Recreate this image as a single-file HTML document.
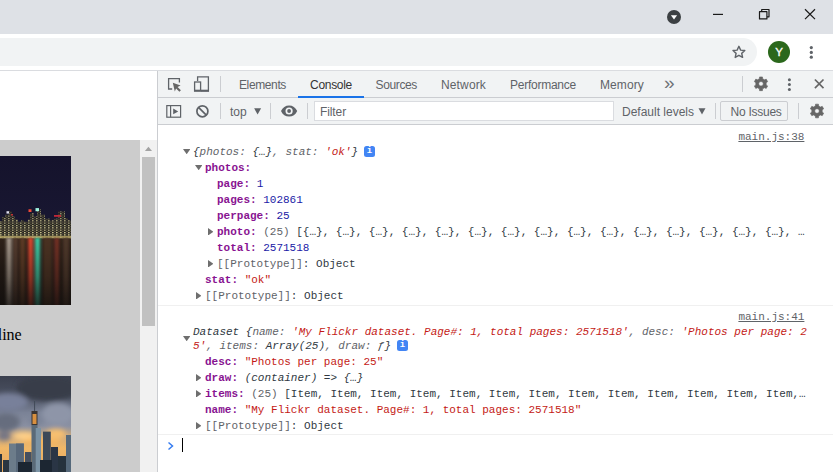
<!DOCTYPE html>
<html><head><meta charset="utf-8">
<style>
*{box-sizing:border-box;margin:0;padding:0}
html,body{width:836px;height:472px;overflow:hidden;background:#fff;font-family:"Liberation Sans",sans-serif}
.abs{position:absolute}
#titlebar{left:0;top:0;width:833px;height:34px;background:#dee1e6}
#toolbar{left:0;top:34px;width:833px;height:37px;background:#fff;border-bottom:1px solid #dadce0}
#omni{left:-20px;top:38px;width:777px;height:28px;border-radius:14px;background:#f1f3f4}
#avatar{left:768px;top:41px;width:22px;height:22px;border-radius:50%;background:#2b681c;color:#fff;font-size:11.500px;text-align:center;line-height:22.500px;-webkit-text-stroke:0.350px #fff}
#page{left:0;top:71px;width:157px;height:401px;background:#fff;overflow:hidden}
#grey{left:0;top:69px;width:140px;height:340px;background:#ccc}
#sb{left:140px;top:69px;width:17px;height:340px;background:#f1f1f1}
#thumb{left:142px;top:86px;width:13px;height:169px;background:#c1c1c1}
#dt{left:157px;top:71px;width:676px;height:401px;background:#fff;border-left:1px solid #cbcdd1}
#tabs{left:0;top:0;width:675px;height:27px;background:#f1f3f4;border-bottom:1px solid #cbcdd1;font-size:12px;color:#5f6368}
#tabs span{position:absolute;top:7px;line-height:14px;white-space:nowrap}
#ctb{left:0;top:27px;width:675px;height:27px;background:#f1f3f4;border-bottom:1px solid #cbcdd1;font-size:12px;color:#5f6368}
#ctb span{position:absolute;white-space:nowrap;line-height:14px}
.vsep{position:absolute;width:1px;background:#cbcdd1}
#con{left:0;top:54px;width:675px;height:347px;font-family:"Liberation Mono",monospace;font-size:11px;color:#303942}
.ln{position:absolute;white-space:pre;line-height:16px;height:16px}
.k{color:#881391;font-weight:bold}
.n{color:#1a1aa6}
.s{color:#c41a16}
.g{color:#5f6368}
.i{font-style:italic}
.d{color:#303942}
.tri{position:absolute;background:#6e6e6e}
.tr{width:5.4px;height:7.4px;clip-path:polygon(0 0,100% 50%,0 100%)}
.td{width:7.4px;height:5.2px;clip-path:polygon(0 0,100% 0,50% 100%)}
.link{position:absolute;text-decoration:underline;color:#5f6368;white-space:pre;line-height:14px}
.info{display:block;width:11px;height:11px;border-radius:2.5px;background:#4285f4;color:#fff;font-size:9px;line-height:11px;text-align:center;font-style:normal;font-weight:bold}
</style></head><body>
<div id="titlebar" class="abs"></div>
<div id="toolbar" class="abs"></div>
<div id="omni" class="abs"></div>
<div id="avatar" class="abs">Y</div>
<svg class="abs" style="left:0;top:0" width="836" height="70" viewBox="0 0 836 70">
 <circle cx="674" cy="17" r="7" fill="#3c4043"/>
 <path d="M670.900 15.200h6.200l-3.100 4.200z" fill="#fff"/>
 <path d="M713 14.400h10" stroke="#1a1a1a" stroke-width="1.200"/>
 <path d="M759.500 11.700h7.400v7.200h-7.400z M761.700 11.700v-2.200h7.300v7.300h-2.100" stroke="#1a1a1a" stroke-width="1.200" fill="none" stroke-linejoin="round"/>
 <path d="M805 9.300l10 9.800M815 9.300l-10 9.800" stroke="#1a1a1a" stroke-width="1.250"/>
 <path transform="translate(738.900 52.300) scale(0.880) translate(-738.800 -52.300)" d="M738.8 45.5l2 4.3 4.7.5-3.5 3.2 1 4.6-4.2-2.400-4.200 2.400 1-4.600-3.500-3.200 4.700-.5z" fill="none" stroke="#5f6368" stroke-width="1.600" stroke-linejoin="round"/>
 <circle cx="811.300" cy="47.600" r="1.600" fill="#5f6368"/><circle cx="811.300" cy="52.400" r="1.600" fill="#5f6368"/><circle cx="811.300" cy="57.200" r="1.600" fill="#5f6368"/>
</svg>
<div id="page" class="abs">
 <div id="grey" class="abs"></div>
 <div id="sb" class="abs"></div>
 <div id="thumb" class="abs"></div>
<svg class="abs" style="left:0;top:85px" width="71" height="149" viewBox="0 0 71 149">
  <defs>
   <linearGradient id="sky1" x1="0" y1="0" x2="0" y2="1"><stop offset="0" stop-color="#15132c"/><stop offset="1" stop-color="#1c1b38"/></linearGradient>
   <linearGradient id="wat" x1="0" y1="0" x2="0" y2="1"><stop offset="0" stop-color="#2e2119"/><stop offset="0.5" stop-color="#1e1612"/><stop offset="1" stop-color="#14100e"/></linearGradient>
   <linearGradient id="fd" x1="0" y1="0" x2="0" y2="1"><stop offset="0" stop-color="#fff"/><stop offset="0.6" stop-color="#999"/><stop offset="1" stop-color="#333"/></linearGradient>
   <mask id="mk" maskUnits="userSpaceOnUse" x="0" y="78" width="71" height="71"><rect x="0" y="78" width="71" height="71" fill="url(#fd)"/></mask>
   <pattern id="win" width="4" height="3" patternUnits="userSpaceOnUse"><rect width="4" height="3" fill="#26251f"/><rect x="0" y="0" width="1.600" height="1.500" fill="#e0d498"/><rect x="2.300" y="1.700" width="1.200" height="1" fill="#a89868"/></pattern>
   <linearGradient id="dk" x1="0" y1="0" x2="0" y2="1"><stop offset="0" stop-color="#1a1a2a" stop-opacity=".4"/><stop offset="1" stop-color="#1a1a2a" stop-opacity="0"/></linearGradient>
   <filter id="b1" x="-50%" y="-10%" width="200%" height="120%"><feGaussianBlur stdDeviation="1.500 0.800"/></filter>
   <filter id="b2"><feGaussianBlur stdDeviation="0.550"/></filter>
  </defs>
  <rect width="71" height="149" fill="url(#sky1)"/>
  <g filter="url(#b2)" transform="translate(0 19.600) scale(1 0.783)">
   <path d="M0 58h2v-5h3v-3h4v-4h3v6h3v4h3v3h3v-2h3v2h4v-3h2v-8h4v4h3v-9h4v7h4v5h5v2h4v-2h4v-9h7v8h3v3h3v31H0z" fill="url(#win)"/>
   <path d="M0 58h2v-5h3v-3h4v-4h3v6h3v4h3v3h3v-2h3v2h4v-3h2v-8h4v4h3v-9h4v7h4v5h5v2h4v-2h4v-9h7v8h3v3h3v20H0z" fill="url(#dk)"/>
   <rect x="0" y="77" width="71" height="3.500" fill="#b8a868" opacity=".8"/>
   <rect x="28.500" y="43" width="3" height="3.500" fill="#f04838"/>
   <rect x="35.500" y="41.500" width="3.500" height="4" fill="#9ff4e0"/>
   <rect x="54" y="50.500" width="7" height="2" fill="#d82838"/>
   <rect x="6.500" y="45.500" width="2.500" height="3" fill="#e0e0f0"/>
   <rect x="11" y="49" width="2" height="2" fill="#c03030"/>
  </g>
  <rect x="0" y="82.500" width="71" height="66.500" fill="url(#wat)"/>
  <g filter="url(#b1)" mask="url(#mk)">
   <rect x="6.500" y="82" width="5" height="69" fill="#b0a498"/>
   <rect x="13.500" y="82" width="4" height="69" fill="#5c4030"/>
   <rect x="20" y="82" width="5" height="69" fill="#603c28"/>
   <rect x="28.300" y="82" width="4.600" height="69" fill="#f04c30"/>
   <rect x="35" y="82" width="5" height="69" fill="#3cd8b0"/>
   <rect x="43" y="82" width="9" height="69" fill="#4c3020"/>
   <rect x="54.500" y="82" width="4.500" height="69" fill="#7c3028"/>
   <rect x="63" y="82" width="6" height="69" fill="#50382c"/>
  </g>
 </svg>
 <svg class="abs" style="left:0;top:305px" width="71" height="96" viewBox="0 0 71 96">
  <defs>
   <linearGradient id="sky2" x1="0" y1="0" x2="0" y2="1">
    <stop offset="0" stop-color="#3b404e"/><stop offset="0.2" stop-color="#4a5060"/><stop offset="0.38" stop-color="#7a8296"/><stop offset="0.52" stop-color="#8a90a2"/><stop offset="0.62" stop-color="#c8a880"/><stop offset="0.75" stop-color="#f0b868"/><stop offset="1" stop-color="#e8a860"/></linearGradient>
   <filter id="b3"><feGaussianBlur stdDeviation="2.500"/></filter>
   <filter id="b4"><feGaussianBlur stdDeviation="0.500"/></filter>
  </defs>
  <rect width="71" height="96" fill="url(#sky2)"/>
  <g filter="url(#b3)">
   <ellipse cx="48" cy="12" rx="32" ry="13" fill="#383c49"/>
   <ellipse cx="8" cy="26" rx="20" ry="9" fill="#78809a"/>
   <ellipse cx="58" cy="38" rx="16" ry="11" fill="#8e95a8"/>
   <ellipse cx="6" cy="46" rx="14" ry="9" fill="#666d7e"/>
   <ellipse cx="36" cy="44" rx="8" ry="6" fill="#7c8498"/>
   <ellipse cx="24" cy="60" rx="11" ry="4" fill="#ffd088"/>
   <ellipse cx="56" cy="58" rx="10" ry="5" fill="#f8c070"/>
   <ellipse cx="4" cy="60" rx="7" ry="5" fill="#767684"/>
   <ellipse cx="42" cy="66" rx="20" ry="4" fill="#f4b660"/>
  </g>
  <g filter="url(#b4)">
   <path d="M34.600 25v10" stroke="#404858" stroke-width="1"/>
   <path d="M31.500 35h6v14h-6z" fill="#3a3430"/>
   <path d="M32.500 38h4v10h-4z" fill="#d89040"/>
   <path d="M31.500 49h6v47h-6z" fill="#5a6a78"/>
   <path d="M35.700 52h5.300v44h-5.300z" fill="#7a92a4"/>
   <path d="M43 55.600h7.800v40.400H43z" fill="#3c4a58"/>
   <path d="M9 67.500h14.800V96H9z" fill="#6c7c8a"/>
   <path d="M16 67.500h7.800V96H16z" fill="#58687a"/>
   <path d="M66 59h5v37h-5z" fill="#54687a"/>
   <path d="M51 71h7v25h-7z" fill="#2c3644"/>
   <path d="M25 76h6.500v20H25z" fill="#44505e"/>
   <path d="M58 80h8v16h-8z" fill="#26303c"/>
   <path d="M0 78h2v18H0z M3 84h6v12H3z" fill="#2a3440"/>
   <path d="M18 86h14v10H18z M40 84h12v12H40z" fill="#1e2630"/>
  </g>
 </svg>
 <div class="abs" style="right:135.300px;top:255px;font-family:'Liberation Serif',serif;font-size:16px;line-height:18px;color:#000;white-space:pre">Skyline</div>
</div>
<div id="dt" class="abs">
 <div id="tabs" class="abs">
  <span style="left:81px;letter-spacing:-0.38px">Elements</span>
  <span style="left:152px;color:#333;letter-spacing:-0.29px">Console</span>
  <span style="left:217.5px;letter-spacing:-0.36px">Sources</span>
  <span style="left:283px;letter-spacing:0.14px">Network</span>
  <span style="left:352px;letter-spacing:-0.25px">Performance</span>
  <span style="left:442px;letter-spacing:0.1px">Memory</span>
  <span style="left:506px;font-size:19px;top:5px;color:#6e7277">»</span>
  <div class="abs" style="left:140px;top:25px;width:66px;height:2px;background:#1a73e8"></div>
  <div class="vsep" style="left:62px;top:5px;height:16px"></div>
  <div class="vsep" style="left:584px;top:5px;height:16px"></div>
 </div>
 <div id="ctb" class="abs">
  <span style="left:72px;top:7px">top</span>
  <div class="abs" style="left:156px;top:3px;width:300px;height:20px;background:#fff;border:1px solid #dadce0"></div>
  <span style="left:162px;top:7px;letter-spacing:-0.1px">Filter</span>
  <span style="left:464px;top:7px;letter-spacing:0px">Default levels</span>
  <div class="abs" style="left:562px;top:3px;width:68px;height:20px;border:1px solid #cbcdd1;border-radius:2px"></div>
  <span style="left:572.5px;top:7px;letter-spacing:-0.25px">No Issues</span>
  <div class="vsep" style="left:62px;top:5px;height:16px"></div>
  <div class="vsep" style="left:112px;top:5px;height:16px"></div>
  <div class="vsep" style="left:149px;top:5px;height:16px"></div>
  <div class="vsep" style="left:557px;top:5px;height:16px"></div>
  <div class="vsep" style="left:640px;top:5px;height:16px"></div>
 </div>
 <div id="con" class="abs">
  <div class="abs" style="left:0;top:180px;width:675px;height:1px;background:#f0f0f0"></div>
  <div class="abs" style="left:0;top:309px;width:675px;height:1px;background:#f0f0f0"></div>
 </div>
</div>
<svg class="abs" style="left:0;top:0" width="836" height="472" viewBox="0 0 836 472">
 <!-- inspect -->
 <path d="M172.2 89h-3.6v-10.4h10.8v4" fill="none" stroke="#5f6368" stroke-width="1.3"/>
 <path d="M172.800 82.800l7.800 2.800-3 1.300 3.300 3.300-1.500 1.500-3.300-3.300-1.300 3z" fill="#666"/>
 <!-- device -->
 <path d="M197.6 81v-4.2h10.8v14.2h-7.4" fill="none" stroke="#5f6368" stroke-width="1.3"/>
 <rect x="194.6" y="82" width="6" height="9" fill="none" stroke="#5f6368" stroke-width="1.3"/>
 <path d="M194 90.6h15" stroke="#5f6368" stroke-width="1.8"/>
 <!-- sidebar -->
 <rect x="166.8" y="105.6" width="13.8" height="11.6" fill="none" stroke="#5f6368" stroke-width="1.2"/>
 <path d="M170.6 105.6v11.6" stroke="#5f6368" stroke-width="1.2"/>
 <path d="M173.2 108.6l5 2.8-5 2.8z" fill="#5f6368"/>
 <!-- clear -->
 <circle cx="202.4" cy="111.3" r="5.5" fill="none" stroke="#5f6368" stroke-width="1.7"/>
 <path d="M198.5 107.4l7.8 7.8" stroke="#5f6368" stroke-width="1.7"/>
 <!-- dropdown arrows -->
 <path d="M254.1 108.2h7l-3.5 6.2z" fill="#5f6368"/>
 <path d="M698.5 108.2h7l-3.5 6.2z" fill="#5f6368"/>
 <!-- eye -->
 <path d="M281 111c1.6-3.6 4.6-5.6 8.1-5.6s6.5 2 8.1 5.6c-1.6 3.6-4.6 5.6-8.1 5.600s-6.500-2-8.100-5.600z M289.100 107.400a3.600 3.600 0 1 0 0 7.200a3.600 3.600 0 1 0 0-7.200z" fill="#5f6368" fill-rule="evenodd"/>
 <circle cx="289.100" cy="111" r="1.900" fill="#5f6368"/>
 <!-- tab-bar right -->
 <path class="gear" d="M759.36 78.76 L759.54 76.95 L762.46 76.95 L762.64 78.76 L764.55 79.86 L766.20 79.12 L767.66 81.64 L766.18 82.70 L766.18 84.90 L767.66 85.96 L766.20 88.48 L764.55 87.74 L762.64 88.84 L762.46 90.65 L759.54 90.65 L759.36 88.84 L757.45 87.74 L755.80 88.48 L754.34 85.96 L755.82 84.90 L755.82 82.70 L754.34 81.64 L755.80 79.12 L757.45 79.86Z M758.70 83.80 a2.30 2.30 0 1 0 4.60 0 a2.30 2.30 0 1 0 -4.60 0Z" fill="#666" fill-rule="evenodd" stroke="#666" stroke-width="0.6" stroke-linejoin="round"/>
 <circle cx="789.400" cy="79.800" r="1.500" fill="#5f6368"/><circle cx="789.400" cy="84.600" r="1.500" fill="#5f6368"/><circle cx="789.400" cy="89.500" r="1.500" fill="#5f6368"/>
 <path d="M814.900 79.500l8.600 8.600M823.500 79.500l-8.600 8.600" stroke="#666" stroke-width="1.700"/>
 <path class="gear" d="M815.36 105.96 L815.54 104.15 L818.46 104.15 L818.64 105.96 L820.55 107.06 L822.20 106.32 L823.66 108.84 L822.18 109.90 L822.18 112.10 L823.66 113.16 L822.20 115.68 L820.55 114.94 L818.64 116.04 L818.46 117.85 L815.54 117.85 L815.36 116.04 L813.45 114.94 L811.80 115.68 L810.34 113.16 L811.82 112.10 L811.82 109.90 L810.34 108.84 L811.80 106.32 L813.45 107.06Z M814.70 111.00 a2.30 2.30 0 1 0 4.60 0 a2.30 2.30 0 1 0 -4.60 0Z" fill="#666" fill-rule="evenodd" stroke="#666" stroke-width="0.6" stroke-linejoin="round"/>
 <!-- scrollbar arrow -->
 <path d="M144.900 151h7.100l-3.550-4.300z" fill="#a3a3a3"/>
</svg>
<div id="lines" class="abs" style="left:0;top:0;width:836px;height:472px;font-family:'Liberation Mono',monospace;font-size:11px;color:#303942">
 <span class="link" style="left:738.4px;top:130px">main.js:38</span>
 <span class="link" style="left:738.4px;top:310px">main.js:41</span>
 <div class="tri td" style="left:183px;top:149px"></div>
 <div class="ln i" style="left:193px;top:144px">{<span class="g">photos: </span>{…}<span class="g">, stat: </span><span class="s">'ok'</span>}</div>
 <span class="info abs" style="left:364px;top:146px">i</span>
 <div class="tri td" style="left:195px;top:165px"></div>
 <div class="ln" style="left:205px;top:160px"><span class="k">photos:</span></div>
 <div class="ln" style="left:217px;top:176px"><span class="k">page:</span> <span class="n">1</span></div>
 <div class="ln" style="left:217px;top:192px"><span class="k">pages:</span> <span class="n">102861</span></div>
 <div class="ln" style="left:217px;top:208px"><span class="k">perpage:</span> <span class="n">25</span></div>
 <div class="tri tr" style="left:208px;top:228px"></div>
 <div class="ln" style="left:217px;top:224px"><span class="k">photo:</span> <span class="g">(25) </span>[{…}, {…}, {…}, {…}, {…}, {…}, {…}, {…}, {…}, {…}, {…}, {…}, {…}, {…}, {…}, …</div>
 <div class="ln" style="left:217px;top:240px"><span class="k">total:</span> <span class="n">2571518</span></div>
 <div class="tri tr" style="left:208px;top:260px"></div>
 <div class="ln" style="left:217px;top:256px"><span class="g">[[Prototype]]</span>: Object</div>
 <div class="ln" style="left:205px;top:272px"><span class="k">stat:</span> <span class="s">"ok"</span></div>
 <div class="tri tr" style="left:196px;top:292px"></div>
 <div class="ln" style="left:205px;top:288px"><span class="g">[[Prototype]]</span>: Object</div>

 <div class="tri td" style="left:183px;top:336px"></div>
 <div class="ln i" style="left:193px;top:325px;line-height:14px">Dataset {<span class="g">name: </span><span class="s">'My Flickr dataset. Page#: 1, total pages: 2571518'</span><span class="g">, desc: </span><span class="s">'Photos per page: 2</span></div>
 <div class="ln i" style="left:193px;top:339px;line-height:14px"><span class="s">5'</span><span class="g">, items: </span>Array(25)<span class="g">, draw: </span>ƒ}</div>
 <span class="info abs" style="left:397px;top:340px">i</span>
 <div class="ln" style="left:205px;top:354px"><span class="k">desc:</span> <span class="s">"Photos per page: 25"</span></div>
 <div class="tri tr" style="left:196px;top:374px"></div>
 <div class="ln" style="left:205px;top:370px"><span class="k">draw:</span> <span class="i">(container) =&gt; {…}</span></div>
 <div class="tri tr" style="left:196px;top:390px"></div>
 <div class="ln" style="left:205px;top:386px"><span class="k">items:</span> <span class="g">(25) </span>[Item, Item, Item, Item, Item, Item, Item, Item, Item, Item, Item, Item, Item,…</div>
 <div class="ln" style="left:205px;top:402px"><span class="k">name:</span> <span class="s">"My Flickr dataset. Page#: 1, total pages: 2571518"</span></div>
 <div class="tri tr" style="left:196px;top:422px"></div>
 <div class="ln" style="left:205px;top:418px"><span class="g">[[Prototype]]</span>: Object</div>
 <svg class="abs" style="left:166.500px;top:440.500px" width="8" height="10" viewBox="0 0 8 10"><path d="M1.5 1.5l4 3.5-4 3.5" fill="none" stroke="#367cf1" stroke-width="1.5"/></svg>
 <div class="abs" style="left:182px;top:438px;width:1px;height:14px;background:#000"></div>
</div>
</body></html>
